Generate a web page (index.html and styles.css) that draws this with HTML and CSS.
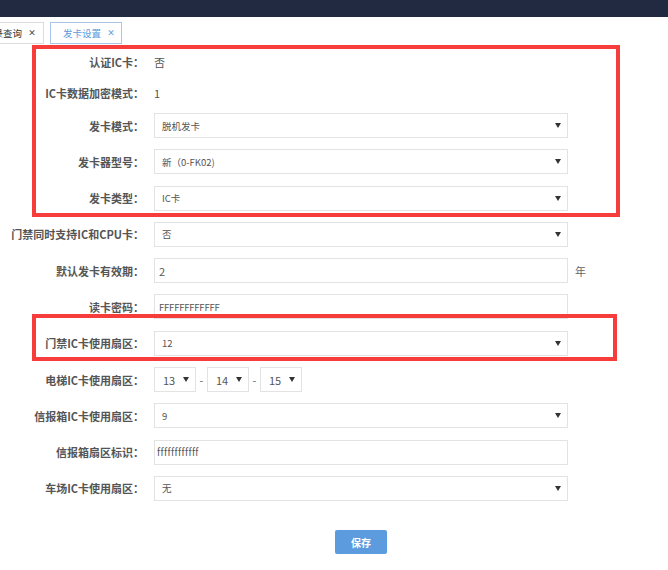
FILE: index.html
```html
<!DOCTYPE html>
<html lang="zh-CN">
<head>
<meta charset="utf-8">
<title>发卡设置</title>
<link rel="stylesheet" href="styles.css">
</head>
<body>
<div class="topbar"></div>
<div class="tabs">
  <div class="tab">记录查询<span class="close">×</span></div>
  <div class="tab active">发卡设置<span class="close">×</span></div>
</div>
<div class="form">
  <div class="row text first"><div class="label">认证IC卡：</div><div class="value">否</div></div>
  <div class="row text second"><div class="label">IC卡数据加密模式：</div><div class="value">1</div></div>
  <div class="row"><div class="label">发卡模式：</div><div class="select"><span>脱机发卡</span><i class="arrow"></i></div></div>
  <div class="row"><div class="label">发卡器型号：</div><div class="select"><span>新（0-FK02)</span><i class="arrow"></i></div></div>
  <div class="row"><div class="label">发卡类型：</div><div class="select"><span>IC卡</span><i class="arrow"></i></div></div>
  <div class="row"><div class="label">门禁同时支持IC和CPU卡：</div><div class="select"><span>否</span><i class="arrow"></i></div></div>
  <div class="row"><div class="label">默认发卡有效期：</div><div class="input">2</div><div class="unit">年</div></div>
  <div class="row"><div class="label">读卡密码：</div><div class="input mono">FFFFFFFFFFFF</div></div>
  <div class="row"><div class="label">门禁IC卡使用扇区：</div><div class="select"><span>12</span><i class="arrow"></i></div></div>
  <div class="row"><div class="label">电梯IC卡使用扇区：</div>
    <div class="triple">
      <div class="select small"><span>13</span><i class="arrow"></i></div>
      <span class="dash">-</span>
      <div class="select small"><span>14</span><i class="arrow"></i></div>
      <span class="dash">-</span>
      <div class="select small"><span>15</span><i class="arrow"></i></div>
    </div>
  </div>
  <div class="row"><div class="label">信报箱IC卡使用扇区：</div><div class="select"><span>9</span><i class="arrow"></i></div></div>
  <div class="row"><div class="label">信报箱扇区标识：</div><div class="input narrow">ffffffffffff</div></div>
  <div class="row"><div class="label">车场IC卡使用扇区：</div><div class="select"><span>无</span><i class="arrow"></i></div></div>
  <div class="row actions"><div class="label"></div><div class="btn-wrap"><button class="btn">保存</button></div></div>
</div>
<div class="mark mark-1"></div>
<div class="mark mark-2"></div>
</body>
</html>
```
FILE: styles.css
```css
html, body {
  margin: 0;
  padding: 0;
  background: #fff;
}
body {
  font-family: "Noto Sans CJK SC", "Noto Sans", "Liberation Sans", sans-serif;
  color: #555;
  width: 668px;
  height: 570px;
  overflow: hidden;
  position: relative;
}
.topbar {
  height: 17px;
  background: #222a42;
}
.tabs {
  display: flex;
  gap: 6px;
  margin-top: 5px;
  margin-left: -29px;
  height: 22px;
}
.tab {
  box-sizing: border-box;
  height: 22px;
  border: 1px solid #dcdcdc;
  padding: 0 7px 0 12px;
  font-size: 9.5px;
  line-height: 20px;
  color: #333;
  display: flex;
  align-items: center;
}
.tab .close {
  font-size: 8px;
  font-weight: bold;
  margin-left: 6px;
  color: #444;
}
.tab.active {
  border-color: #a9c4ea;
  color: #5b9bde;
  padding-right: 6px;
}
.tab.active .close {
  color: #5b9bde;
}
.form {
  margin-top: 5px;
}
.row {
  display: flex;
  align-items: center;
  height: 25px;
  margin-bottom: 11.3px;
}
.row.text.first {
  margin-bottom: 6px;
}
.row.text.second {
  margin-bottom: 8px;
}
.label {
  width: 144px;
  flex: none;
  text-align: right;
  font-size: 11px;
  font-weight: bold;
  color: #555;
  white-space: nowrap;
}
.value {
  margin-left: 10px;
  font-size: 11px;
  color: #555;
}
.select, .input {
  box-sizing: border-box;
  margin-left: 10px;
  width: 414px;
  height: 25px;
  border: 1px solid #e3e3e3;
  background: #fff;
  font-size: 9.5px;
  color: #555;
  display: flex;
  align-items: center;
}
.select {
  justify-content: space-between;
  padding: 0 6px 0 7px;
}
.input {
  padding: 0 4px;
  font-size: 11px;
}
.input.mono {
  font-size: 9.5px;
  letter-spacing: -0.2px;
}
.input.narrow {
  font-size: 9.5px;
  letter-spacing: 0.4px;
  padding-left: 2px;
}
.arrow {
  width: 0;
  height: 0;
  border-left: 3px solid transparent;
  border-right: 3px solid transparent;
  border-top: 5px solid #333;
}
.unit {
  margin-left: 7px;
  font-size: 11px;
  color: #666;
}
.triple {
  display: flex;
  align-items: center;
  margin-left: 10px;
}
.triple .select.small {
  margin-left: 0;
  width: 42px;
  padding: 0 6px 0 8px;
  font-size: 11px;
}
.dash {
  width: 11px;
  text-align: center;
  font-size: 11px;
  color: #666;
}
.row.actions {
  margin-top: 28.7px;
}
.btn-wrap {
  margin-left: 10px;
  width: 414px;
  display: flex;
  justify-content: center;
}
.btn {
  width: 52px;
  height: 24px;
  border: none;
  border-radius: 2px;
  background: #5b9bde;
  color: #fff;
  font-family: "Noto Sans CJK SC", sans-serif;
  font-size: 10px;
  font-weight: bold;
  padding: 0;
}
.mark {
  position: absolute;
  box-sizing: border-box;
  border: 4px solid #f73c3c;
}
.mark-1 {
  left: 32px;
  top: 45px;
  width: 588px;
  height: 172px;
}
.mark-2 {
  left: 32px;
  top: 314px;
  width: 585px;
  height: 47px;
}
```
